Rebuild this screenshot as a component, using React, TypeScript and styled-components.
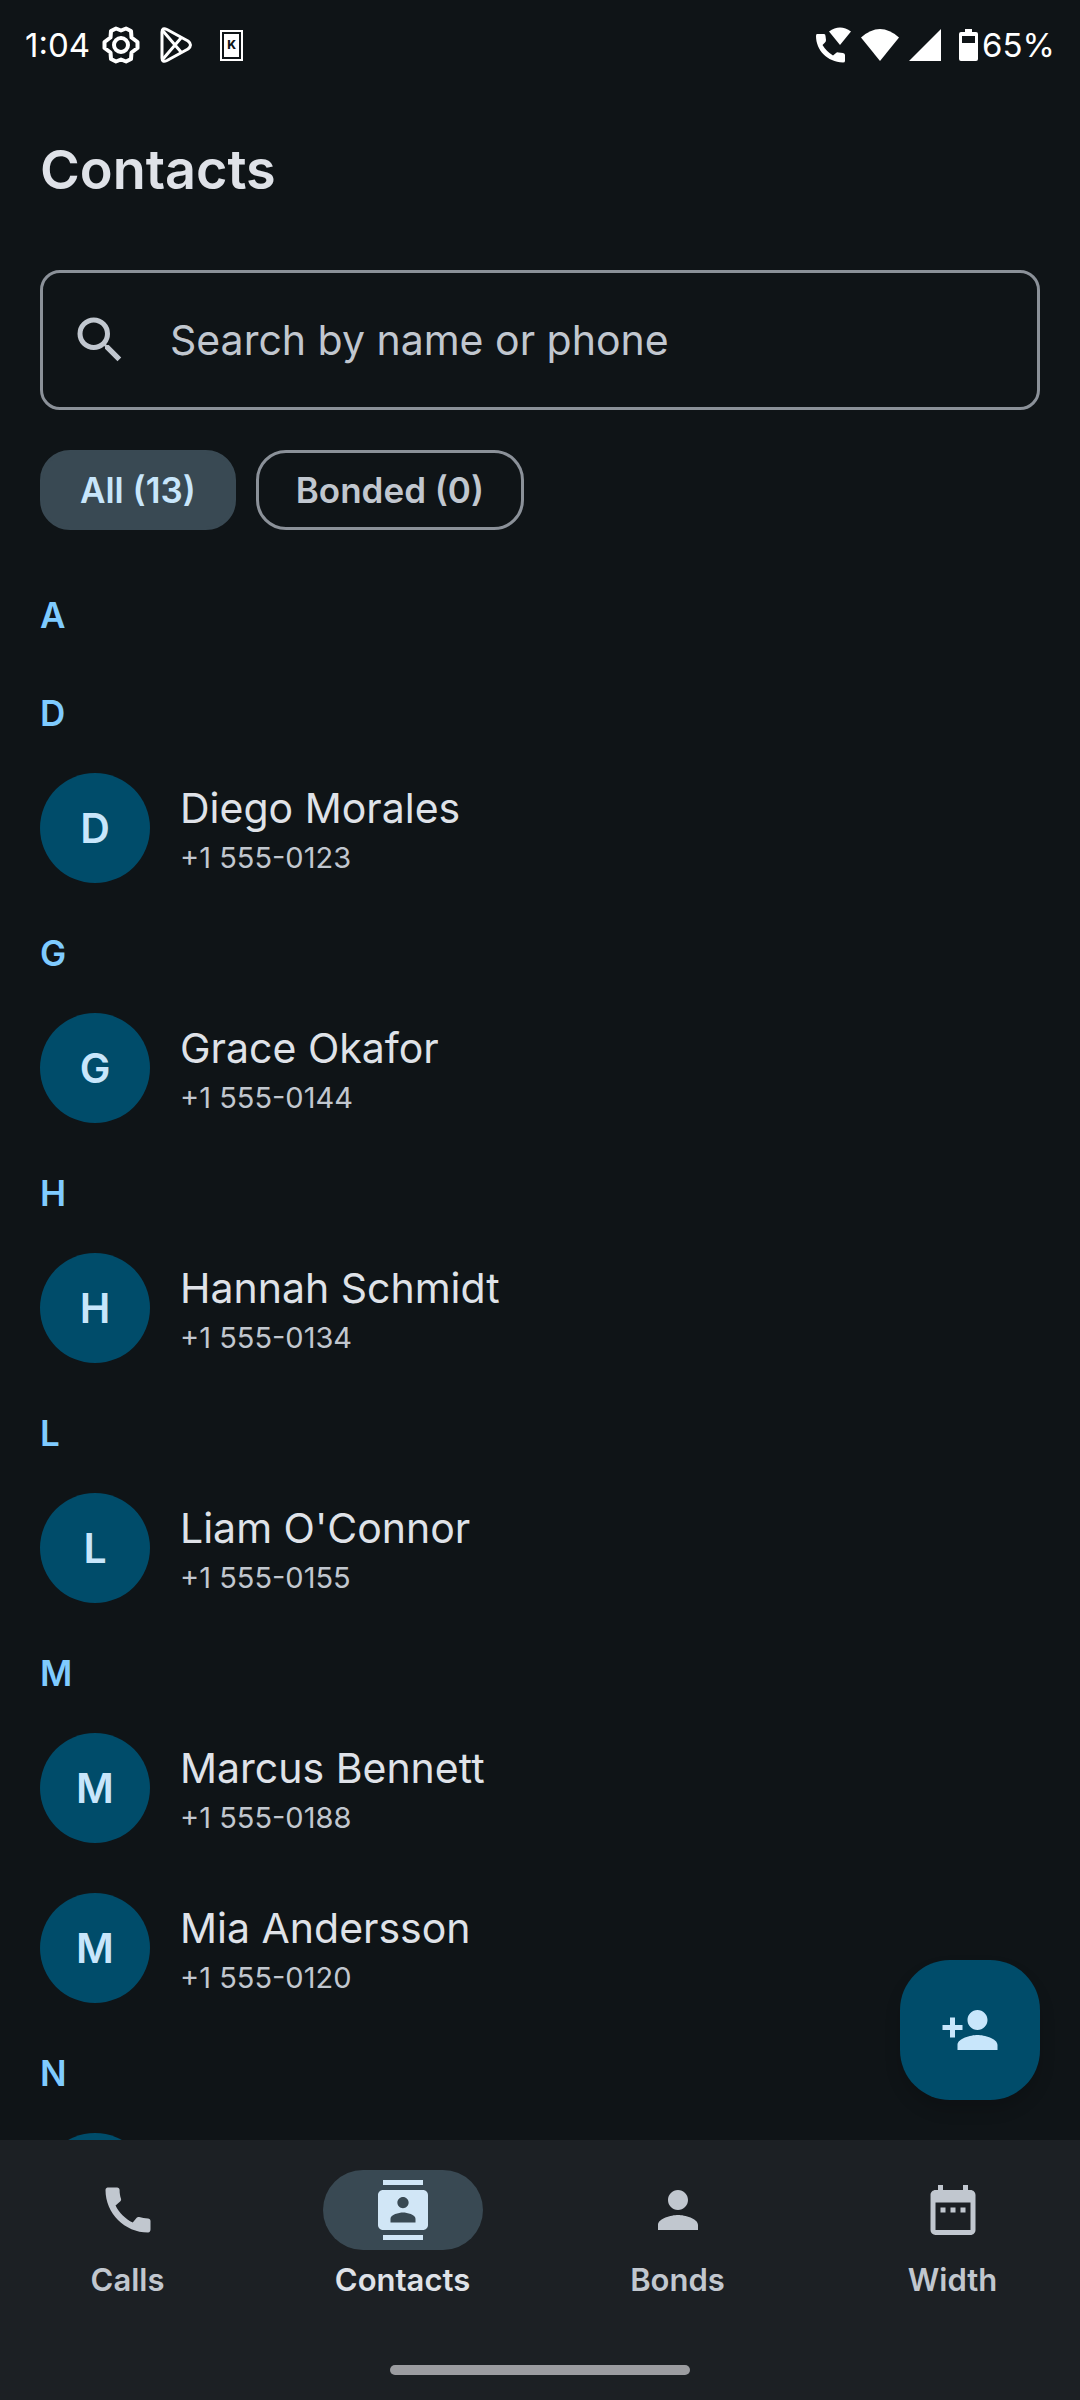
import React from "react";
import styled, { createGlobalStyle } from "styled-components";
import {
  MdCall,
  MdContacts,
  MdDateRange,
  MdPerson,
  MdPersonAdd,
  MdSearch,
} from "react-icons/md";

const color = {
  bg: "#0f1417",
  nav: "#1c2024",
  text: "#dfe2e8",
  muted: "#c1c7cf",
  outline: "#8b9199",
  accent: "#7fcbff",
  container: "#004c6a",
  onContainer: "#c8e6fb",
  selected: "#394953",
  onSelected: "#d1e6f6",
};

const GlobalStyle = createGlobalStyle`
  *, *::before, *::after { box-sizing: border-box; }
  html, body, #root { height: 100%; }
  body {
    margin: 0;
    background: ${color.bg};
    color: ${color.text};
    font-family: Inter, "Noto Sans", sans-serif;
  }
  button, input { font: inherit; color: inherit; }
  svg { display: block; flex: none; }
`;

const Screen = styled.div`
  display: flex;
  flex-direction: column;
  height: 100vh;
  overflow: hidden;
`;

const StatusBar = styled.div`
  display: flex;
  flex: none;
  align-items: center;
  justify-content: space-between;
  height: 90px;
  padding: 0 25px;
  color: #fff;
  font-size: 33px;
  line-height: 40px;
`;

const StatusGroup = styled.div<{ $gap: number }>`
  display: flex;
  align-items: center;
  gap: ${(p) => p.$gap}px;
`;

const AppBar = styled.header`
  display: flex;
  flex: none;
  align-items: center;
  height: 160px;
  padding: 0 40px;
`;

const Title = styled.h1`
  margin: 0;
  font-size: 54px;
  font-weight: 600;
  line-height: 70px;
`;

const Filters = styled.section`
  display: flex;
  flex: none;
  flex-direction: column;
  gap: 40px;
  padding: 20px 40px 40px;
`;

const SearchBox = styled.label`
  display: flex;
  align-items: center;
  gap: 40px;
  height: 140px;
  padding: 0 27px;
  border: 3px solid ${color.outline};
  border-radius: 20px;
  color: ${color.muted};
`;

const SearchInput = styled.input`
  flex: 1;
  min-width: 0;
  padding: 0;
  border: 0;
  outline: 0;
  background: transparent;
  font-size: 41px;
  line-height: 60px;
  &::placeholder { color: ${color.muted}; opacity: 1; }
`;

const Chips = styled.div`
  display: flex;
  gap: 20px;
`;

const Chip = styled.button<{ $selected?: boolean }>`
  height: 80px;
  padding: 0 37px;
  border: 3px solid ${(p) => (p.$selected ? color.selected : color.outline)};
  border-radius: 30px;
  background: ${(p) => (p.$selected ? color.selected : "transparent")};
  color: ${(p) => (p.$selected ? color.onContainer : color.muted)};
  font-size: 35px;
  font-weight: 600;
  line-height: 50px;
`;

const Content = styled.main`
  position: relative;
  display: flex;
  flex: 1;
  min-height: 0;
  flex-direction: column;
`;

const ContactList = styled.div`
  flex: 1;
  min-height: 0;
  overflow: hidden;
`;

const Group = styled.section<{ $empty: boolean }>`
  padding: 0 40px ${(p) => (p.$empty ? 18 : 0)}px;
`;

const GroupLetter = styled.h2`
  margin: 0;
  padding: 20px 0 10px;
  color: ${color.accent};
  font-size: 35px;
  font-weight: 600;
  line-height: 50px;
`;

const Row = styled.article`
  display: flex;
  align-items: center;
  gap: 30px;
  height: 160px;
`;

const Avatar = styled.div`
  display: grid;
  flex: none;
  place-items: center;
  width: 110px;
  height: 110px;
  border-radius: 50%;
  background: ${color.container};
  color: ${color.onContainer};
  font-size: 41px;
  font-weight: 600;
  line-height: 60px;
`;

const Name = styled.div`
  font-size: 41px;
  line-height: 60px;
`;

const Phone = styled.div`
  color: ${color.muted};
  font-size: 29px;
  line-height: 40px;
`;

const Fab = styled.button`
  position: absolute;
  right: 40px;
  bottom: 40px;
  display: grid;
  place-items: center;
  width: 140px;
  height: 140px;
  padding: 0;
  border: 0;
  border-radius: 50px;
  background: ${color.container};
  color: ${color.onContainer};
  box-shadow: 0 10px 16px rgba(0, 0, 0, 0.15);
`;

const BottomBar = styled.footer`
  display: flex;
  flex: none;
  flex-direction: column;
  align-items: center;
  justify-content: space-between;
  height: 260px;
  padding: 30px 0 25px;
  background: ${color.nav};
`;

const Nav = styled.nav`
  display: flex;
  gap: 20px;
  width: 100%;
`;

const NavItem = styled.button<{ $selected: boolean }>`
  display: flex;
  flex: 1;
  flex-direction: column;
  align-items: center;
  gap: 10px;
  padding: 0;
  border: 0;
  background: transparent;
  color: ${(p) => (p.$selected ? color.text : color.muted)};
  font-size: 31px;
  font-weight: 600;
  line-height: 40px;
`;

const Indicator = styled.span<{ $selected: boolean }>`
  display: grid;
  place-items: center;
  width: 160px;
  height: 80px;
  border-radius: 40px;
  background: ${(p) => (p.$selected ? color.selected : "transparent")};
  color: ${(p) => (p.$selected ? color.onSelected : color.muted)};
`;

const HomeHandle = styled.div`
  width: 300px;
  height: 10px;
  border-radius: 5px;
  background: #9b9ca0;
`;

const KLetter = styled.span`
  display: grid;
  place-items: center;
  width: 15px;
  height: 23px;
  background: #fff;
  color: ${color.bg};
  font-size: 12px;
  font-weight: 800;
  line-height: 12px;
`;

const KBadge = styled.span`
  display: grid;
  place-items: center;
  width: 23px;
  height: 31px;
  border: 2px solid #fff;
`;

const GearIcon = () => (
  <svg width="38" height="38" viewBox="0 0 38 38" fill="none" stroke="#fff" strokeWidth="4" strokeLinejoin="round">
    <path d="M14 2.5 19 4.500 24 2.500 29 5 29.500 11.500 35.500 16V22L29.500 26.500 29 33 24 35.500 19 33.500 14 35.500 9 33 8.500 26.500 2.500 22V16L8.500 11.500 9 5Z" />
    <circle cx="19" cy="19" r="7" />
  </svg>
);

const PlayIcon = () => (
  <svg width="40" height="36" viewBox="0 0 40 36" fill="none" stroke="#fff" strokeWidth="3" strokeLinejoin="round" strokeLinecap="round">
    <path d="M2 5Q2 0 7 2.500L28 14Q33 18 28 22L7 33.500Q2 36 2 31Z" />
    <path d="M3 4 21 25M3 32 21 11" />
  </svg>
);

const WifiCallIcon = () => (
  <svg width="35" height="36" viewBox="0 0 35 36" fill="#fff">
    <path d="M24 18 13 4.500Q24-3.500 35 4.500Z" />
    <path d="M1 7H8Q9.500 7 9.500 9L10 13Q10 14.500 9 15.500L6.500 18Q10 24 17 28.500L20 26Q21 25 22.500 25.500L27 26Q29 26.500 29 28V34Q29 35.500 27 35.500C11 35 0 23 0 9Q0 7 1 7Z" />
  </svg>
);

const WifiIcon = () => (
  <svg width="38" height="32" viewBox="0 0 38 32" fill="#fff">
    <path d="M19 32 0 8.500Q19-8.500 38 8.500Z" />
  </svg>
);

const SignalIcon = () => (
  <svg width="32" height="32" viewBox="0 0 32 32" fill="#fff">
    <path d="M32 0V32H0Z" />
  </svg>
);

const BatteryIcon = () => (
  <svg width="19" height="32" viewBox="0 0 19 32" fill="#fff" fillRule="evenodd">
    <path d="M6 0H13V3H17Q19 3 19 5V30Q19 32 17 32H2Q0 32 0 30V5Q0 3 2 3H6ZM3 7V14H16V7Z" />
  </svg>
);

type Contact = { name: string; phone: string };

const groups: { letter: string; contacts: Contact[] }[] = [
  { letter: "A", contacts: [] },
  { letter: "D", contacts: [{ name: "Diego Morales", phone: "+1 555-0123" }] },
  { letter: "G", contacts: [{ name: "Grace Okafor", phone: "+1 555-0144" }] },
  { letter: "H", contacts: [{ name: "Hannah Schmidt", phone: "+1 555-0134" }] },
  { letter: "L", contacts: [{ name: "Liam O'Connor", phone: "+1 555-0155" }] },
  {
    letter: "M",
    contacts: [
      { name: "Marcus Bennett", phone: "+1 555-0188" },
      { name: "Mia Andersson", phone: "+1 555-0120" },
    ],
  },
  { letter: "N", contacts: [{ name: "", phone: "" }] },
];

const tabs = [
  { label: "Calls", Icon: MdCall },
  { label: "Contacts", Icon: MdContacts },
  { label: "Bonds", Icon: MdPerson },
  { label: "Width", Icon: MdDateRange },
];

export default function App() {
  return (
    <>
      <GlobalStyle />
      <Screen>
        <StatusBar>
          <StatusGroup $gap={12}>
            <span>1:04</span>
            <StatusGroup $gap={20}>
              <GearIcon />
              <PlayIcon />
              <KBadge>
                <KLetter>K</KLetter>
              </KBadge>
            </StatusGroup>
          </StatusGroup>
          <StatusGroup $gap={18}>
            <StatusGroup $gap={10}>
              <WifiCallIcon />
              <WifiIcon />
              <SignalIcon />
            </StatusGroup>
            <StatusGroup $gap={4}>
              <BatteryIcon />
              <span>65%</span>
            </StatusGroup>
          </StatusGroup>
        </StatusBar>
        <AppBar>
          <Title>Contacts</Title>
        </AppBar>
        <Filters>
          <SearchBox>
            <MdSearch size={60} />
            <SearchInput
              type="search"
              aria-label="Search by name or phone"
              placeholder="Search by name or phone"
            />
          </SearchBox>
          <Chips>
            <Chip type="button" $selected aria-pressed="true">All (13)</Chip>
            <Chip type="button" aria-pressed="false">Bonded (0)</Chip>
          </Chips>
        </Filters>
        <Content>
          <ContactList>
            {groups.map(({ letter, contacts }) => (
              <Group key={letter} $empty={contacts.length === 0}>
                <GroupLetter>{letter}</GroupLetter>
                {contacts.map((c) => (
                  <Row key={c.name}>
                    <Avatar>{c.name.charAt(0)}</Avatar>
                    <div>
                      <Name>{c.name}</Name>
                      <Phone>{c.phone}</Phone>
                    </div>
                  </Row>
                ))}
              </Group>
            ))}
          </ContactList>
          <Fab type="button" aria-label="Add contact">
            <MdPersonAdd size={60} />
          </Fab>
        </Content>
        <BottomBar>
          <Nav>
            {tabs.map(({ label, Icon }) => (
              <NavItem key={label} type="button" $selected={label === "Contacts"}>
                <Indicator $selected={label === "Contacts"}>
                  <Icon size={60} />
                </Indicator>
                {label}
              </NavItem>
            ))}
          </Nav>
          <HomeHandle />
        </BottomBar>
      </Screen>
    </>
  );
}
